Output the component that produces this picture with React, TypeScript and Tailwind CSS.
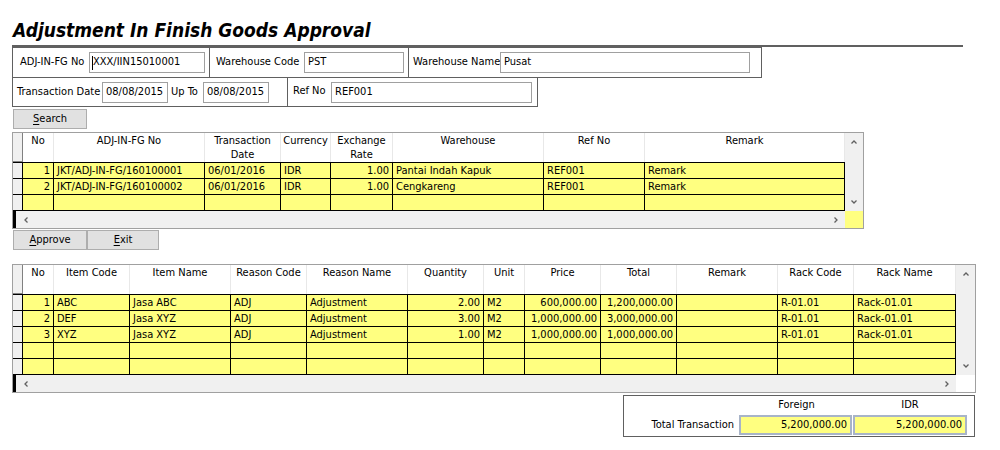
import React from "react";

type Col = { w: number; label: string[]; align: "l" | "r" };

const Chev = ({ dir }: { dir: "u" | "d" | "l" | "r" }) => {
  const pts =
    dir === "u"
      ? "1.5,5.5 4,3 6.5,5.5"
      : dir === "d"
      ? "1.5,2.5 4,5 6.5,2.5"
      : dir === "l"
      ? "5.5,1.5 3,4 5.5,6.5"
      : "2.5,1.5 5,4 2.5,6.5";
  return (
    <svg width="8" height="8" viewBox="0 0 8 8" className="block">
      <polyline points={pts} fill="none" stroke="#606060" strokeWidth="1.3" />
    </svg>
  );
};

const Grid = ({
  cols,
  rows,
  width,
  scrollW,
  corner,
  rowCount,
}: {
  cols: Col[];
  rows: string[][];
  width: number;
  scrollW: number;
  corner: string;
  rowCount: number;
}) => {
  const all: string[][] = [];
  for (let i = 0; i < rowCount; i++) all.push(rows[i] || cols.map(() => ""));
  return (
    <div className="flex border border-[#a0a0a0] bg-white" style={{ width }}>
      <div className="flex flex-col">
        <div className="flex h-[29px]">
          <div className="w-[10px] bg-[#f0f0f0] border-r border-b border-[#808080]" />
          {cols.map((c, i) => (
            <div
              key={i}
              className="border-r border-[#e8e8e8] text-center pt-[1px] leading-[14px] whitespace-nowrap overflow-hidden"
              style={{ width: c.w }}
            >
              {c.label.map((l, j) => (
                <div key={j}>{l}</div>
              ))}
            </div>
          ))}
        </div>
        <div className="border-t border-black">
          {all.map((r, ri) => (
            <div key={ri} className="flex h-[16px] border-b border-black">
              <div className="w-[10px] bg-[#f0f0f0] border-r border-black" />
              {cols.map((c, ci) => (
                <div
                  key={ci}
                  className={
                    "bg-[#ffff80] border-r border-black px-[3px] leading-[15px] whitespace-nowrap overflow-hidden " +
                    (c.align === "r" ? "text-right" : "text-left")
                  }
                  style={{ width: c.w }}
                >
                  {r[ci]}
                </div>
              ))}
            </div>
          ))}
        </div>
        <div className="flex h-[17px] bg-[#f0f0f0] items-center">
          <div className="w-[3px] h-full bg-black" />
          <div className="ml-[6px]">
            <Chev dir="l" />
          </div>
          <div className="flex-1" />
          <div className="mr-[5px]">
            <Chev dir="r" />
          </div>
        </div>
      </div>
      <div className="flex flex-col" style={{ width: scrollW }}>
        <div className="flex-1 bg-[#f0f0f0] flex flex-col items-center justify-between py-[5px]">
          <Chev dir="u" />
          <Chev dir="d" />
        </div>
        <div className="h-[17px]" style={{ background: corner }} />
      </div>
    </div>
  );
};

const Btn = ({ u, rest, w }: { u: string; rest: string; w: string }) => (
  <div
    className={
      "h-[20px] bg-[#e1e1e1] border border-[#adadad] flex items-center justify-center " + w
    }
  >
    <span>
      <span className="underline underline-offset-[2px]">{u}</span>
      {rest}
    </span>
  </div>
);

const Input = ({ w, v, caret }: { w: string; v: string; caret?: boolean }) => (
  <div className={"h-[21px] border border-[#a0a0a0] bg-white flex items-center pl-[2px] " + w}>
    {caret && <div className="w-[1px] h-[14px] bg-black" />}
    <span className={caret ? "" : "pl-[1px]"}>{v}</span>
  </div>
);

export default function App() {
  const cols1: Col[] = [
    { w: 31, label: ["No"], align: "r" },
    { w: 151, label: ["ADJ-IN-FG No"], align: "l" },
    { w: 76, label: ["Transaction", "Date"], align: "l" },
    { w: 50, label: ["Currency"], align: "l" },
    { w: 62, label: ["Exchange", "Rate"], align: "r" },
    { w: 151, label: ["Warehouse"], align: "l" },
    { w: 101, label: ["Ref No"], align: "l" },
    { w: 200, label: ["Remark"], align: "l" },
  ];
  const rows1 = [
    ["1", "JKT/ADJ-IN-FG/160100001", "06/01/2016", "IDR", "1.00", "Pantai Indah Kapuk", "REF001", "Remark"],
    ["2", "JKT/ADJ-IN-FG/160100002", "06/01/2016", "IDR", "1.00", "Cengkareng", "REF001", "Remark"],
  ];
  const cols2: Col[] = [
    { w: 31, label: ["No"], align: "r" },
    { w: 76, label: ["Item Code"], align: "l" },
    { w: 101, label: ["Item Name"], align: "l" },
    { w: 76, label: ["Reason Code"], align: "l" },
    { w: 101, label: ["Reason Name"], align: "l" },
    { w: 76, label: ["Quantity"], align: "r" },
    { w: 41, label: ["Unit"], align: "l" },
    { w: 76, label: ["Price"], align: "r" },
    { w: 76, label: ["Total"], align: "r" },
    { w: 101, label: ["Remark"], align: "l" },
    { w: 76, label: ["Rack Code"], align: "l" },
    { w: 102, label: ["Rack Name"], align: "l" },
  ];
  const rows2 = [
    ["1", "ABC", "Jasa ABC", "ADJ", "Adjustment", "2.00", "M2", "600,000.00", "1,200,000.00", "", "R-01.01", "Rack-01.01"],
    ["2", "DEF", "Jasa XYZ", "ADJ", "Adjustment", "3.00", "M2", "1,000,000.00", "3,000,000.00", "", "R-01.01", "Rack-01.01"],
    ["3", "XYZ", "Jasa XYZ", "ADJ", "Adjustment", "1.00", "M2", "1,000,000.00", "1,000,000.00", "", "R-01.01", "Rack-01.01"],
  ];

  return (
    <div className="w-[1000px] h-[450px] bg-white text-black text-[11px] font-['DejaVu_Sans_Condensed','DejaVu_Sans',sans-serif] font-stretch-condensed overflow-hidden whitespace-nowrap">
      <div className="pt-[18px] pl-[13px] h-[42px]">
        <div className="text-[19px] leading-[24px] font-bold italic">
          Adjustment In Finish Goods Approval
        </div>
      </div>
      <div className="ml-[12px] mt-[3px] w-[951px] h-[2px] bg-[#606060]" />
      <div className="ml-[12px] w-[750px] h-[31px] border border-[#606060] flex">
        <div className="w-[197px] shrink-0 border-r border-[#606060] flex items-center pl-[7px]">
          <span className="w-[69px] shrink-0">ADJ-IN-FG No</span>
          <Input w="w-[116px] shrink-0" v="XXX/IIN15010001" caret />
        </div>
        <div className="w-[199px] shrink-0 border-r border-[#606060] flex items-center pl-[6px]">
          <span className="w-[88px] shrink-0">Warehouse Code</span>
          <Input w="w-[100px] shrink-0" v="PST" />
        </div>
        <div className="flex-1 flex items-center pl-[4px]">
          <span className="w-[87px] shrink-0">Warehouse Name</span>
          <Input w="w-[250px] shrink-0" v="Pusat" />
        </div>
      </div>
      <div className="ml-[12px] w-[526px] h-[29px] border border-t-0 border-[#606060] flex">
        <div className="w-[275px] shrink-0 border-r border-[#606060] flex items-center pl-[4px]">
          <span className="w-[85px] shrink-0">Transaction Date</span>
          <Input w="w-[66px] h-[20px] shrink-0" v="08/08/2015" />
          <span className="w-[35px] pl-[3px] shrink-0">Up To</span>
          <Input w="w-[66px] h-[20px] shrink-0" v="08/08/2015" />
        </div>
        <div className="flex-1 flex items-center pl-[5px]">
          <span className="w-[38px] -mt-[2px] shrink-0">Ref No</span>
          <Input w="w-[201px] h-[21px] shrink-0" v="REF001" />
        </div>
      </div>
      <div className="ml-[13px] mt-[2px]">
        <Btn u="S" rest="earch" w="w-[74px]" />
      </div>
      <div className="ml-[12px] mt-[3px]">
        <Grid cols={cols1} rows={rows1} width={852} scrollW={18} corner="#ffff80" rowCount={3} />
      </div>
      <div className="ml-[13px] mt-[1px] flex">
        <Btn u="A" rest="pprove" w="w-[74px]" />
        <Btn u="E" rest="xit" w="w-[72px]" />
      </div>
      <div className="ml-[12px] mt-[14px]">
        <Grid cols={cols2} rows={rows2} width={964} scrollW={19} corner="#ffffff" rowCount={5} />
      </div>
      <div className="ml-[623px] mt-[2px] w-[352px] h-[42px] border border-[#606060] flex flex-col">
        <div className="flex h-[19px] items-center">
          <div className="w-[116px]" />
          <div className="w-[113px] text-center">Foreign</div>
          <div className="w-[114px] text-center">IDR</div>
        </div>
        <div className="flex items-center">
          <div className="w-[111px] text-right pr-[1px]">Total Transaction</div>
          <div className="ml-[4px] w-[113px] h-[20px] border-2 border-[#a8b4c8] bg-[#ffff80] text-right pr-[3px] leading-[16px]">
            5,200,000.00
          </div>
          <div className="ml-[1px] w-[114px] h-[20px] border-2 border-[#a8b4c8] bg-[#ffff80] text-right pr-[3px] leading-[16px]">
            5,200,000.00
          </div>
        </div>
      </div>
    </div>
  );
}
